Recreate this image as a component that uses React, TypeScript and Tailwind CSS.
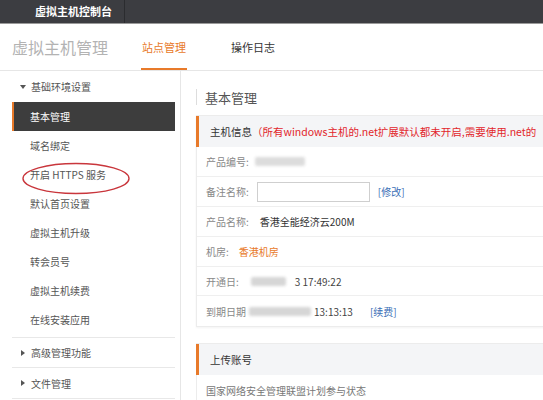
import React from "react";

const Caret = ({ down }: { down?: boolean }) =>
  down ? (
    <svg width="6" height="4" viewBox="0 0 6 4" className="mr-[5px]">
      <polygon points="0,0 6,0 3,4" fill="#555" />
    </svg>
  ) : (
    <svg width="4" height="6" viewBox="0 0 4 6" className="mr-[6px] ml-[1px]">
      <polygon points="0,0 4,3 0,6" fill="#555" />
    </svg>
  );

const Blur = ({ w, shade = "#d6d6d6" }: { w: number; shade?: string }) => (
  <span
    className="inline-block h-[9px] rounded-[2px] blur-[1.5px]"
    style={{ width: w, background: shade }}
  />
);

export default function App() {
  const items = ["域名绑定", "开启 HTTPS 服务", "默认首页设置", "虚拟主机升级", "转会员号", "虚拟主机续费", "在线安装应用"];
  return (
    <div
      className="w-[543px] h-[400px] overflow-hidden bg-white text-[10px]"
      style={{ fontFamily: '"Noto Sans CJK SC", "Noto Sans", sans-serif' }}
    >
      {/* top bar */}
      <div className="h-[23px] bg-[#3c3d41] flex">
        <div className="w-[125px] border-r border-[#2b2c2f] flex items-center pl-[35px] text-white text-[11px] font-bold leading-none">
          虚拟主机控制台
        </div>
      </div>
      <div className="h-px bg-[#9a9a9a]" />
      {/* header */}
      <div className="h-[47px] flex items-center border-b border-[#e6e6e6]">
        <div className="w-[141px] pl-[12px] text-[16px] text-[#b3b3b3] leading-none">虚拟主机管理</div>
        <div className="relative h-full flex items-center px-px text-[11px] text-[#e87a2a] leading-none">
          站点管理
          <span className="absolute left-0 right-0 bottom-0 h-[2px] bg-[#e87a2a]" />
        </div>
        <div className="ml-[44px] text-[11px] text-[#333] leading-none">操作日志</div>
      </div>
      {/* body */}
      <div className="flex h-[329px]">
        <div className="relative w-[181px] shrink-0 border-r border-[#e6e6e6] pl-[12px] pr-[5px] text-[#555]">
          <div className="h-[31px] flex items-center pl-[8px]">
            <Caret down />
            基础环境设置
          </div>
          <div className="pb-[3px] border-b border-[#e8e8e8]">
            <div className="h-[29px] flex items-center bg-[#3d3d3d] border-l-2 border-[#e87a2a] pl-[16px] text-white">
              基本管理
            </div>
            {items.map((t) => (
              <div key={t} className="h-[29px] flex items-center pl-[18px]">
                {t}
              </div>
            ))}
          </div>
          <div className="h-[30px] flex items-center pl-[8px] border-b border-[#e8e8e8]">
            <Caret />
            高级管理功能
          </div>
          <div className="h-[31px] flex items-center pl-[8px] border-b border-[#e8e8e8]">
            <Caret />
            文件管理
          </div>
          <svg className="absolute left-[21px] top-[91px]" width="110" height="33" viewBox="0 0 110 33">
            <ellipse cx="55" cy="16.5" rx="53" ry="15" fill="none" stroke="#c9363c" strokeWidth="1.4" />
          </svg>
        </div>
        <div className="flex-1 min-w-0 pl-[15px] overflow-hidden">
          <div className="mt-[18px] h-[16px] border-l border-[#dddddd] pl-[8px] flex items-center text-[13px] text-[#555] leading-none">
            基本管理
          </div>
          <div className="mt-[10px] w-[400px] border border-[#ececec] shadow-[0_1px_2px_rgba(0,0,0,0.05)]">
            <div className="h-[31px] -ml-px bg-[#f4f5f7] border-l-[3px] border-[#e87a2a] pl-[11px] flex items-center whitespace-nowrap text-[10.5px]">
              <span className="text-[#333]">主机信息</span>
              <span className="text-[#e2262b]">（所有windows主机的.net扩展默认都未开启,需要使用.net的</span>
            </div>
            <div className="h-[30px] border-b border-[#efefef] pl-[9px] flex items-center">
              <span className="text-[#888]">产品编号:</span>
              <span className="ml-[6px]"><Blur w={50} shade="#dcdcdc" /></span>
            </div>
            <div className="h-[30px] border-b border-[#efefef] pl-[9px] flex items-center">
              <span className="text-[#888]">备注名称:</span>
              <span className="ml-[8px] w-[113px] h-[20px] border border-[#cfcfcf] bg-white" />
              <span className="ml-[8px] text-[#3b6fb6]">[修改]</span>
            </div>
            <div className="h-[30px] border-b border-[#efefef] pl-[9px] flex items-center">
              <span className="text-[#888]">产品名称:</span>
              <span className="ml-[11px] text-[#333]">香港全能经济云200M</span>
            </div>
            <div className="h-[30px] border-b border-[#efefef] pl-[9px] flex items-center">
              <span className="text-[#888]">机房:</span>
              <span className="ml-[10px] text-[#e87a2a]">香港机房</span>
            </div>
            <div className="h-[29px] border-b border-[#efefef] pl-[9px] flex items-center">
              <span className="text-[#888]">开通日:</span>
              <span className="ml-[12px]"><Blur w={35} /></span>
              <span className="ml-[9px] text-[#444]">3 17:49:22</span>
            </div>
            <div className="h-[30px] pl-[9px] flex items-center">
              <span className="text-[#888]">到期日期</span>
              <span className="ml-[3px]"><Blur w={62} /></span>
              <span className="ml-[3px] text-[#444]">13:13:13</span>
              <span className="ml-[17px] text-[#3b6fb6]">[续费]</span>
            </div>
          </div>
          <div className="mt-[16px] w-[400px] border border-[#ececec]">
            <div className="h-[31px] -ml-px bg-[#f4f5f7] border-l-[3px] border-[#e87a2a] pl-[11px] flex items-center text-[10.5px] text-[#333]">
              上传账号
            </div>
            <div className="h-[30px] pl-[9px] flex items-center text-[#777]">国家网络安全管理联盟计划参与状态</div>
          </div>
        </div>
      </div>
    </div>
  );
}
